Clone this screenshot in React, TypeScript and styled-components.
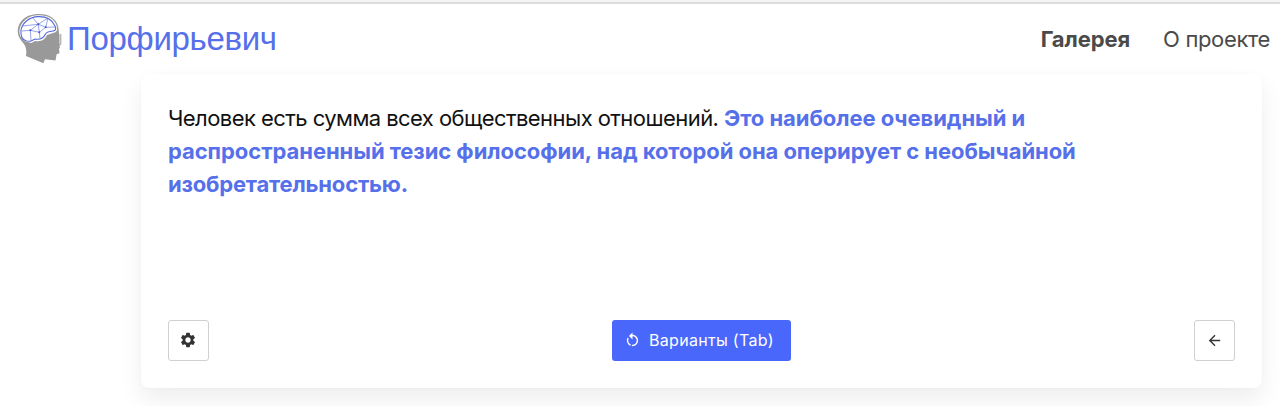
import styled, { createGlobalStyle } from 'styled-components';
import { MdArrowBack, MdSettings } from 'react-icons/md';

const App = () => {
  return (
    <>
      <GlobalStyle />
      <Page>
        <Header>
          <Brand href="#">
            <HeadLogo />
            <BrandName>Порфирьевич</BrandName>
          </Brand>
          <Nav>
            <NavLink href="#" $active>
              Галерея
            </NavLink>
            <NavLink href="#">О проекте</NavLink>
          </Nav>
        </Header>
        <Editor>
          <Story>
            Человек есть сумма всех общественных отношений.{' '}
            <Generated>
              Это наиболее очевидный и<br />
              распространенный тезис философии, над которой она оперирует с необычайной
              <br />
              <Tail>изобретательностью.</Tail>
            </Generated>
          </Story>
          <Controls>
            <IconButton aria-label="Настройки">
              <MdSettings size={18} />
            </IconButton>
            <PrimaryButton>
              <RestartIcon />
              <span>Варианты (Tab)</span>
            </PrimaryButton>
            <IconButton aria-label="Назад">
              <MdArrowBack size={17} />
            </IconButton>
          </Controls>
        </Editor>
      </Page>
    </>
  );
};

export default App;

const HeadLogo = () => (
  <svg width="46" height="52" viewBox="0 0 46 52" fill="none">
    <path
      d="M21 1C31 0.500 39 5 41 13C42 16 41.500 19 42.500 22L42.500 25V32.500L43 34L42 36L42.500 39Q42.500 41 39.700 41L38.500 47.500L28 46.300L26.300 50.300L9 43C10 37 9 33 5 28.500C1 24 0 19 1.300 14C4 5 12 1.300 21 1Z"
      fill="#999"
    />
    <path d="M43.800 21V31.500L42 32" stroke="#999" strokeWidth="1" />
    <path
      d="M8.500 28.500C4 26 2 22 2.500 17C4 8 12 2.500 21 2.300C31 2 37.500 6 39.700 13C40.500 17 40 19 37.500 19.500L30 22C28 26 25 29 18 28L14.500 30Z"
      fill="#fff"
    />
    <path
      d="M9.500 28C5 27 3.500 22 4 17C5.500 9 13 4 21 3.600C30 3.300 35.500 7 38 13C39.500 16 38.500 17.700 36 18C32 18.500 29 19.500 28.500 21C26.500 25 23 27 18 26L13.500 28.300Z"
      stroke="#5168db"
      strokeWidth="1.100"
    />
    <path
      d="M5 13L21.300 11.300L31 5M15 4L21.300 11.300L28.700 14.300L38.500 14M21.300 11.300L13.300 17.300L5 18M13.300 17.300L22.300 19.300L28.700 14.300M21.300 11.300L22.300 19.300L23 25.500M13.300 17.300L14 27.500M28.700 14.300L31 5"
      stroke="#5168db"
      strokeWidth="0.600"
    />
    <g fill="#4559ca">
      <circle cx="21.300" cy="11.300" r="1" />
      <circle cx="13.300" cy="17.300" r="1" />
      <circle cx="22.300" cy="19.300" r="1" />
      <circle cx="28.700" cy="14.300" r="1" />
    </g>
  </svg>
);

const RestartIcon = () => (
  <svg width="17" height="17" viewBox="0 0 24 24" fill="currentColor">
    <path d="M12,4C14.1,4 16.1,4.8 17.6,6.3C20.7,9.4 20.7,14.5 17.6,17.6C15.8,19.5 13.3,20.2 10.9,19.9L11.4,17.9C13.1,18.1 14.9,17.5 16.2,16.2C18.5,13.9 18.5,10.1 16.2,7.7C15.1,6.6 13.5,6 12,6V10.6L7,5.6L12,0.6V4M6.3,17.6C3.7,15 3.3,11 5.1,7.9L6.6,9.4C5.5,11.6 5.9,14.4 7.8,16.2C8.3,16.7 8.9,17.1 9.6,17.4L9,19.4C8,19 7.1,18.4 6.3,17.6Z" />
  </svg>
);

const GlobalStyle = createGlobalStyle`
  * {
    box-sizing: border-box;
  }

  body {
    margin: 0;
    background: #fff;
    font-family: Inter, sans-serif;
    overflow: hidden;
  }
`;

const Page = styled.div`
  height: 406px;
  overflow: hidden;
  border-top: 2px solid #f4f4f4;
`;

const Header = styled.header`
  display: flex;
  justify-content: space-between;
  height: 72px;
  padding: 0 10px 0 17px;
  border-top: 2px solid #dcdcdc;
`;

const Brand = styled.a`
  display: flex;
  align-items: flex-start;
  padding-top: 9px;
  color: #5670ea;
  text-decoration: none;
`;

const BrandName = styled.span`
  margin-left: 4px;
  font-family: 'Liberation Sans', Arial, sans-serif;
  font-size: 33px;
  letter-spacing: -0.3px;
  line-height: 52px;
`;

const Nav = styled.nav`
  display: flex;
  gap: 33px;
`;

const NavLink = styled.a<{ $active?: boolean }>`
  color: #4a4a4a;
  font-size: 22px;
  font-weight: ${({ $active }) => ($active ? 700 : 400)};
  letter-spacing: ${({ $active }) => ($active ? '-0.1px' : '-0.35px')};
  line-height: 70px;
  text-decoration: none;
`;

const Editor = styled.main`
  display: flex;
  flex-direction: column;
  justify-content: space-between;
  height: 314px;
  margin: 0 18px 0 141px;
  padding: 28px 27px 27px;
  border-radius: 8px;
  background: #fff;
  box-shadow: 0 12px 24px rgba(10, 10, 10, 0.07), 0 0 2px rgba(10, 10, 10, 0.04);
`;

const Story = styled.p`
  margin: 0;
  color: #111;
  font-size: 22px;
  letter-spacing: -0.56px;
  line-height: 33px;
  white-space: nowrap;
`;

const Generated = styled.strong`
  color: #5670ea;
  font-weight: 700;
  letter-spacing: -0.06px;
`;

const Tail = styled.span`
  letter-spacing: -0.2px;
`;

const Controls = styled.div`
  display: flex;
  align-items: center;
  justify-content: space-between;
`;

const IconButton = styled.button`
  display: flex;
  align-items: center;
  justify-content: center;
  width: 41px;
  height: 41px;
  padding: 0 1px 1px 0;
  border: 1px solid #d0d0d0;
  border-radius: 3px;
  background: #fff;
  color: #333;
`;

const PrimaryButton = styled.button`
  display: flex;
  align-items: center;
  gap: 8px;
  width: 179px;
  height: 41px;
  padding: 0 0 1px 12px;
  border: 0;
  border-radius: 3px;
  background: #4a67fb;
  color: #fff;
  font-family: inherit;
  font-size: 16px;
  letter-spacing: 0.3px;
  white-space: nowrap;
`;
